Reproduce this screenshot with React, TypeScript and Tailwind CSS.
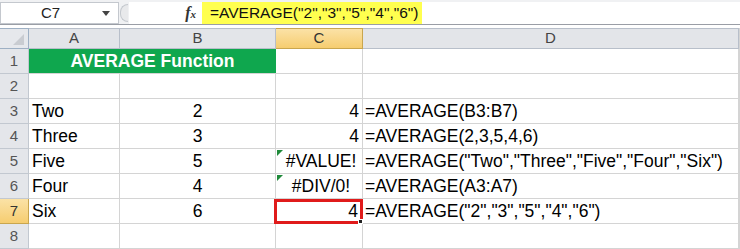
const font = { fontFamily: '"Liberation Sans", Arial, sans-serif' };

const rows: { n: number; a?: string; b?: string; c?: string; d?: string; errC?: boolean }[] = [
  { n: 1 },
  { n: 2 },
  { n: 3, a: "Two", b: "2", c: "4", d: "=AVERAGE(B3:B7)" },
  { n: 4, a: "Three", b: "3", c: "4", d: "=AVERAGE(2,3,5,4,6)" },
  { n: 5, a: "Five", b: "5", c: "#VALUE!", d: '=AVERAGE("Two","Three","Five","Four","Six")', errC: true },
  { n: 6, a: "Four", b: "4", c: "#DIV/0!", d: "=AVERAGE(A3:A7)", errC: true },
  { n: 7, a: "Six", b: "6", c: "4", d: '=AVERAGE("2","3","5","4","6")' },
  { n: 8 },
];

const FormulaBar = () => (
  <div className="flex h-[25px] border-b border-[#9a9ea6] bg-[#f0f1f3] pt-[2px]">
    <div className="flex w-[119px] items-center border border-[#c4c8ce] bg-white pl-[40px] pr-[8px] text-[15px] text-[#222]">
      <span className="flex-1">C7</span>
      <svg width="8" height="5" viewBox="0 0 8 5">
        <path d="M0 0h8L4 5z" fill="#444" />
      </svg>
    </div>
    <div className="flex w-[10px] items-center justify-center">
      <div className="h-[18px] w-[8px] rounded-l-full border border-r-0 border-[#c4c8ce] bg-[#e8e9eb]" />
    </div>
    <div className="flex w-[73px] items-center justify-end bg-white pr-[6px]">
      <span className="text-[16px] font-bold italic text-[#333]" style={{ fontFamily: '"Liberation Serif", serif' }}>
        f<span className="text-[11px]">x</span>
      </span>
    </div>
    <div className="flex items-center bg-[#ffff4f] pl-[8px] pr-[3px] text-[15.5px] text-[#111]">
      =AVERAGE("2","3","5","4","6")
    </div>
    <div className="flex-1 bg-white" />
  </div>
);

const Sheet = () => (
  <div className="mt-[3px] grid grid-cols-[29px_91px_156px_87px_376px] grid-rows-[21px_repeat(8,25px)] border-r border-[#d4d4d4]">
    <div className="relative border-t border-r border-b border-[#9eb0c4] bg-[#e6e8ec]">
      <svg className="absolute bottom-[3px] right-[4px]" width="11" height="11" viewBox="0 0 11 11">
        <path d="M11 0V11H0z" fill="#c9ccd1" />
      </svg>
    </div>
    {["A", "B", "C", "D"].map((l) => (
      <div
        key={l}
        className={
          l === "C"
            ? "flex items-center justify-center border-t border-r border-b border-[#c9a64e] bg-gradient-to-b from-[#fbe2a6] to-[#f6cd6f] text-[15px] text-[#333]"
            : "flex items-center justify-center border-t border-r border-b border-[#b8bfca] bg-[#e3e5e9] text-[15px] text-[#444]"
        }
      >
        {l}
      </div>
    ))}
    {rows.map((r) => (
      <Row key={r.n} r={r} />
    ))}
  </div>
);

const Row = ({ r }: { r: (typeof rows)[number] }) => {
  const hdr =
    r.n === 7
      ? "flex items-center justify-center border-r border-b border-[#c9a64e] bg-gradient-to-b from-[#fbe2a6] to-[#f6cd6f] text-[15px] text-[#333]"
      : "flex items-center justify-center border-r border-b border-[#c2c8d0] bg-[#e4e6ea] text-[15px] text-[#555]";
  const cell = "flex items-center border-r border-b border-[#d4d4d4] text-[17.5px] text-black";
  if (r.n === 1) {
    return (
      <>
        <div className={hdr}>{r.n}</div>
        <div className="col-span-2 flex items-center justify-center border-b border-[#d4d4d4] bg-[#0fa74e] text-[17.5px] font-bold text-white">
          AVERAGE Function
        </div>
        <div className={cell} />
        <div className={cell} />
      </>
    );
  }
  return (
    <>
      <div className={hdr}>{r.n}</div>
      <div className={`${cell} pl-[3px]`}>{r.a}</div>
      <div className={`${cell} justify-center`}>{r.b}</div>
      {r.n === 7 ? (
        <div className="relative -ml-[2px] flex items-center justify-end border-[3px] border-[#e01b1b] pr-[2px] text-[17.5px]">
          {r.c}
          <div className="absolute -bottom-[3px] -right-[3px] h-[5px] w-[5px] border border-white bg-[#222]" />
        </div>
      ) : (
        <div className={`${cell} relative ${r.errC ? "justify-center pl-[4px]" : "justify-end pr-[3px]"}`}>
          {r.errC && (
            <svg className="absolute left-[1px] top-[1px]" width="6" height="6" viewBox="0 0 6 6">
              <path d="M0 0h6L0 6z" fill="#1f8a3a" />
            </svg>
          )}
          {r.c}
        </div>
      )}
      <div className={`${cell} pl-[2px]`}>{r.d}</div>
    </>
  );
};

export default function App() {
  return (
    <div className="h-[249px] w-[740px] overflow-hidden bg-white" style={font}>
      <FormulaBar />
      <Sheet />
    </div>
  );
}
